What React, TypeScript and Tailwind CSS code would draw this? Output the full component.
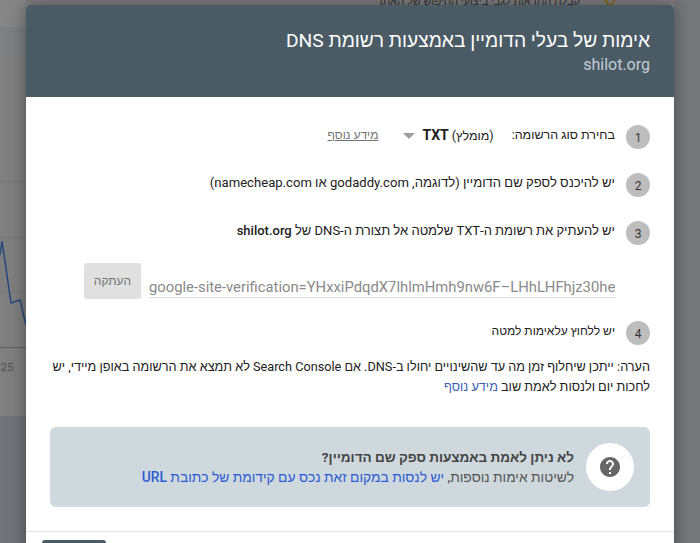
const font = { fontFamily: 'Roboto, "Liberation Sans", sans-serif' };

function Num({ n }: { n: number }) {
  return (
    <span className="flex h-6 w-6 shrink-0 items-center justify-center rounded-full bg-[#bdbdbd] pt-0.5 text-[12px] text-[#333]">
      {n}
    </span>
  );
}

function Backdrop() {
  return (
    <div className="absolute inset-0 bg-[#7f7f7f]">
      <div className="absolute left-0 top-0 h-[27px] w-[26px] bg-[#868686]" />
      <div className="absolute left-0 top-[27px] h-[25px] w-[26px] bg-[#7d7f82]" />
      <div className="absolute left-0 top-[181px] h-px w-[26px] bg-[#767676]" />
      <div className="absolute left-0 top-[237px] h-px w-[26px] bg-[#767676]" />
      <div className="absolute left-0 top-[291px] h-px w-[26px] bg-[#767676]" />
      <div className="absolute left-0 top-[347px] h-px w-[26px] bg-[#5f5f5f]" />
      <svg className="absolute left-0 top-[235px]" width="26" height="100" viewBox="0 0 26 100">
        <path d="M0 20 L2 6 L11 68 L20 65 L26 90" fill="none" stroke="#27487f" strokeWidth="1.5" />
      </svg>
      <span className="absolute left-[1px] top-[360px] text-[11px] text-[#4f4f4f]">25</span>
      <div className="absolute bottom-0 left-0 top-[416px] w-[26px] bg-[#717378]" />
      <div className="absolute right-0 top-0 h-full w-[26px] bg-[#76777b]" />
      <div dir="rtl" className="absolute left-[350px] top-[-6px] w-[230px] truncate text-[11px] text-[#333]">
        קבלת התראות לגבי ביצועי החיפוש של האתר
      </div>
      <svg className="absolute left-[603px] top-[-6px]" width="14" height="14" viewBox="0 0 24 24">
        <path d="M12 2l3 7 7 .6-5.3 4.6 1.6 7L12 17l-6.3 3.2 1.6-7L2 9.6 9 9z" fill="none" stroke="#8a6a1f" strokeWidth="2.5" />
      </svg>
    </div>
  );
}

export default function App() {
  return (
    <div style={font} className="relative h-[543px] w-[700px] overflow-hidden">
      <Backdrop />
      <div dir="rtl" className="relative ml-[26px] mt-[5px] flex h-[600px] w-[648px] flex-col rounded-t-[3px] bg-white shadow-[0_0_18px_rgba(0,0,0,0.4)]">
        <header className="h-[92px] rounded-t-[3px] bg-[#4a5b65] px-6 pt-[24px]">
          <h1 className="text-[19.2px] leading-6 text-white">אימות של בעלי הדומיין באמצעות רשומת DNS</h1>
          <p className="mt-[2px] text-[16px] leading-5 text-[#c3cdd3]">shilot.org</p>
        </header>

        <div className="flex h-[435px] flex-col border-b border-[#e3e3e3] px-6 pt-[28px] text-[13px] text-[#212121]">
          <div className="flex items-start gap-[11px]">
            <Num n={1} />
            <span className="text-[12.5px] leading-5">בחירת סוג הרשומה:</span>
            <span className="mr-[7px] text-[12.5px] leading-5">
              (מומלץ) <b className="text-[14px] font-bold">TXT</b>
            </span>
            <svg className="mr-[-4px] mt-[8px]" width="12" height="6" viewBox="0 0 12 6">
              <path d="M0 0h12L6 6z" fill="#9e9e9e" />
            </svg>
            <span className="mr-[14px] text-[12px] leading-5 text-[#757575] underline">מידע נוסף</span>
          </div>

          <div className="mt-[24px] flex items-start gap-[11px]">
            <Num n={2} />
            <span className="text-[13.1px] leading-5">יש להיכנס לספק שם הדומיין (לדוגמה, godaddy.com או namecheap.com)</span>
          </div>

          <div className="mt-[24px] flex items-start gap-[11px]">
            <Num n={3} />
            <span className="leading-5">
              יש להעתיק את רשומת ה-TXT שלמטה אל תצורת ה-DNS של <b className="font-medium">shilot.org</b>
            </span>
          </div>

          <div className="mr-[34px] mt-[18px] flex h-9 items-start gap-2">
            <div dir="ltr" className="h-[35px] w-[467px] overflow-hidden whitespace-nowrap border-b border-[#e0e0e0] pt-[14px] text-[14.8px] leading-5 text-[#8a8a8a]">
              google-site-verification=YHxxiPdqdX7lhlmHmh9nw6F–LHhLHFhjz30he
            </div>
            <button className="h-9 w-[57px] rounded-[3px] bg-[#e0e0e0] text-[12px] text-[#757575]">העתקה</button>
          </div>

          <div className="mt-[22px] flex items-start gap-[11px]">
            <Num n={4} />
            <span className="text-[12px] leading-5">יש ללחוץ עלאימות למטה</span>
          </div>

          <p className="ml-[-4px] mt-[12px] text-[12.7px] leading-5">
            הערה: ייתכן שיחלוף זמן מה עד שהשינויים יחולו ב-DNS. אם Search Console לא תמצא את הרשומה באופן מיידי, יש
            לחכות יום ולנסות לאמת שוב <a className="text-[#3b5fb5]">מידע נוסף</a>
          </p>

          <div className="mt-[30px] flex h-[80px] items-center gap-3 rounded-[6px] bg-[#cfd8dc] px-[16px]">
            <div className="flex h-12 w-12 shrink-0 items-center justify-center rounded-full bg-white">
              <svg width="24" height="24" viewBox="0 0 24 24" fill="#666">
                <path d="M12 2C6.48 2 2 6.48 2 12s4.48 10 10 10 10-4.48 10-10S17.52 2 12 2zm1 17h-2v-2h2v2zm2.07-7.75l-.9.92C13.45 12.9 13 13.5 13 15h-2v-.5c0-1.1.45-2.1 1.17-2.83l1.24-1.26c.37-.36.59-.86.59-1.41 0-1.1-.9-2-2-2s-2 .9-2 2H8c0-2.21 1.79-4 4-4s4 1.79 4 4c0 .88-.36 1.68-.93 2.25z" />
              </svg>
            </div>
            <div className="leading-5">
              <div className="text-[13.5px] font-bold text-[#444]">לא ניתן לאמת באמצעות ספק שם הדומיין?</div>
              <div className="text-[13.8px] text-[#555]">
                לשיטות אימות נוספות, <a className="text-[#2a5bd7]">יש לנסות במקום זאת נכס עם קידומת של כתובת <b className="font-medium">URL</b></a>
              </div>
            </div>
          </div>
        </div>

        <div className="flex justify-end px-4 pt-2">
          <div className="h-9 w-[64px] rounded-[3px] bg-[#4a5b65]" />
        </div>
      </div>
    </div>
  );
}
